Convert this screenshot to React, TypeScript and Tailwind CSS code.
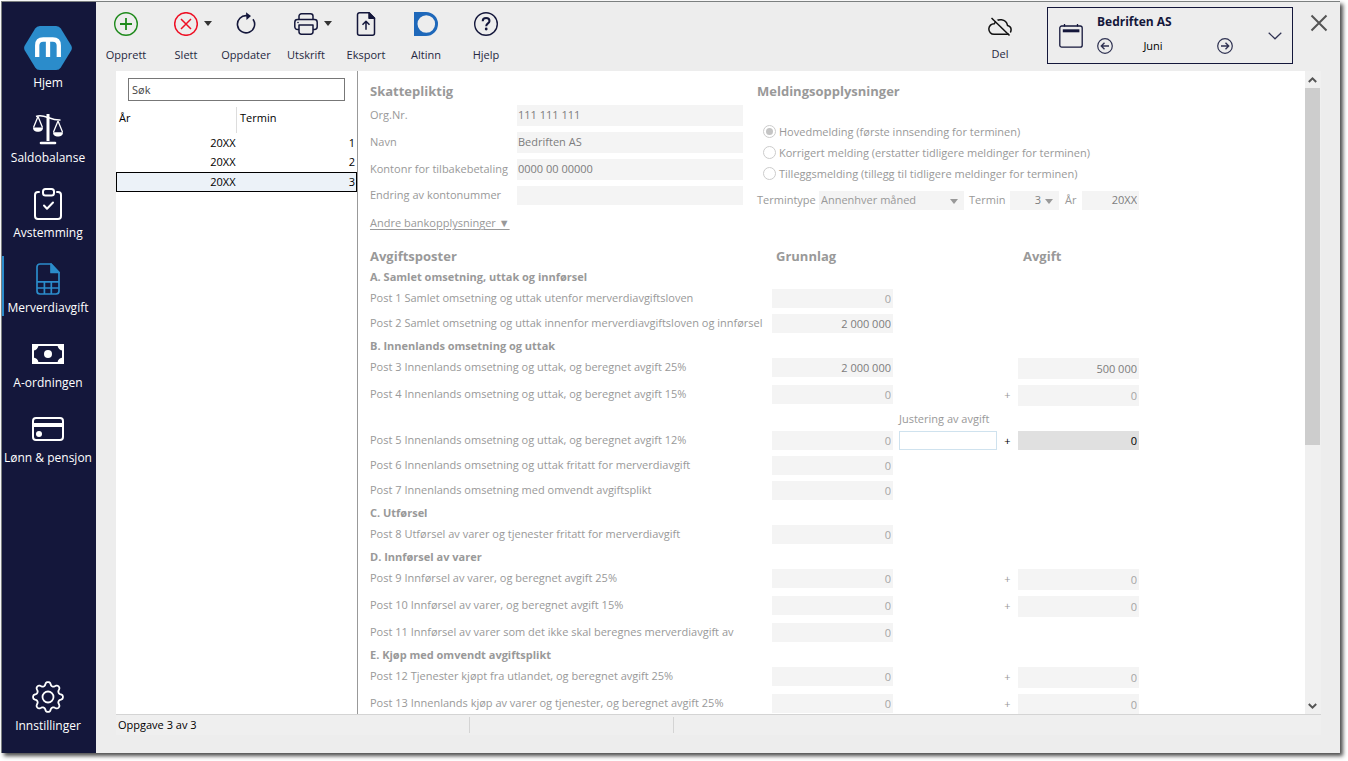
import React from "react";

type IconProps = { className?: string };

/* ---------- sidebar icons ---------- */

const LogoIcon = () => (
  <svg className="shrink-0" width="48" height="44" viewBox="0 0 48 44" aria-hidden="true">
    <path d="M11.2 2.6Q12.800 0 15.800 0H32.200Q35.200 0 36.800 2.600L47.200 19.600Q48.600 22 47.200 24.400L36.800 41.400Q35.200 44 32.200 44H15.800Q12.800 44 11.200 41.400L.8 24.400Q-.6 22 .8 19.600Z" fill="#2b8ccb" />
    <path d="M13.200 31V19.500q0-6 6-6h9.600q6 0 6 6V31M24 13.500V31" fill="none" stroke="#fff" strokeWidth="4.300" />
  </svg>
);

const ScalesIcon = () => (
  <svg width="32" height="32" viewBox="0 0 32 32" fill="none" stroke="#fff" strokeWidth="1.500" aria-hidden="true">
    <path d="M16 1v27" strokeWidth="3" />
    <path d="M9 30h14" strokeWidth="2.600" strokeLinecap="round" />
    <path d="M4 3.500c4-1.500 8-.5 12 1s7 2.800 12.500 2.500" />
    <path d="M6 3.500 1.500 14.500M6 3.500l4.500 11M26 8l-4.500 11M26 8l4.500 11" strokeWidth="1.300" />
    <path d="M1 14.500h10c0 3-2.200 4.300-5 4.300s-5-1.300-5-4.300ZM21 19.200h10c0 3-2.200 4.300-5 4.300s-5-1.300-5-4.300Z" fill="#fff" stroke="none" />
  </svg>
);

const ClipboardIcon = () => (
  <svg width="32" height="32" viewBox="0 0 32 32" fill="none" stroke="#fff" strokeWidth="2" strokeLinecap="round" strokeLinejoin="round" aria-hidden="true">
    <path d="M7 4H6a3 3 0 0 0-3 3v21a3 3 0 0 0 3 3h20a3 3 0 0 0 3-3V7a3 3 0 0 0-3-3h-1" />
    <rect x="11" y="1" width="11" height="6.500" rx="2.500" />
    <path d="m12 17.500 3 3.200 6-6.200" />
  </svg>
);

const SheetIcon = () => (
  <svg width="32" height="32" viewBox="0 0 32 32" fill="none" stroke="#2b8ccb" strokeWidth="1.700" strokeLinejoin="round" aria-hidden="true">
    <path d="M19 1H8a3 3 0 0 0-3 3v24a3 3 0 0 0 3 3h16a3 3 0 0 0 3-3V9.500Z" />
    <path d="M19 1v8.500h8Z" fill="#2b8ccb" />
    <path d="M5 18.800h22M5 25h22M12.400 18.800V31M19.300 18.800V31" />
  </svg>
);

const BanknoteIcon = () => (
  <svg width="32" height="32" viewBox="0 0 32 32" aria-hidden="true">
    <rect x="1" y="7" width="30" height="18" fill="none" stroke="#fff" strokeWidth="2" />
    <path d="M1 7h5.500A5.500 5.500 0 0 1 1 12.500ZM31 7v5.500A5.500 5.500 0 0 1 25.500 7ZM1 25v-5.500A5.500 5.500 0 0 1 6.500 25ZM31 25h-5.500a5.500 5.500 0 0 1 5.500-5.500Z" fill="#fff" />
    <circle cx="16" cy="16" r="4" fill="#fff" />
  </svg>
);

const CardIcon = () => (
  <svg width="32" height="32" viewBox="0 0 32 32" aria-hidden="true">
    <rect x="1" y="5" width="30" height="22" rx="3" fill="none" stroke="#fff" strokeWidth="2" />
    <path d="M1 10h30v4H1Z" fill="#fff" />
    <circle cx="7" cy="21" r="3" fill="#fff" />
  </svg>
);

const gearOutline =
  Array.from({ length: 160 }, (_, i) => {
    const a = (i / 160) * Math.PI * 2;
    const r = 13.2 + 1.9 * Math.tanh(1.5 * Math.cos(8 * a));
    return `${i ? "L" : "M"}${(16 + r * Math.cos(a)).toFixed(2)} ${(16 + r * Math.sin(a)).toFixed(2)}`;
  }).join("") + "Z";

const GearIcon = () => (
  <svg width="32" height="32" viewBox="0 0 32 32" fill="none" stroke="#fff" strokeWidth="1.800" strokeLinejoin="round" aria-hidden="true">
    <path d={gearOutline} />
    <circle cx="16" cy="16" r="5.500" />
  </svg>
);

/* ---------- toolbar icons ---------- */

const AddIcon = () => (
  <svg width="24" height="24" viewBox="0 0 24 24" fill="none" stroke="#1f8a1c" strokeWidth="1.400" aria-hidden="true">
    <circle cx="12" cy="12" r="11.300" />
    <path d="M12 6v12M6 12h12" strokeWidth="1.800" />
  </svg>
);

const DeleteIcon = () => (
  <svg width="24" height="24" viewBox="0 0 24 24" fill="none" stroke="#ee1025" strokeWidth="1.500" aria-hidden="true">
    <circle cx="12" cy="12" r="11.300" />
    <path d="m7 7 10 10M17 7 7 17" />
  </svg>
);

const RefreshIcon = () => (
  <svg width="24" height="24" viewBox="0 0 24 24" aria-hidden="true">
    <path d="M13 3.700a8.600 8.600 0 1 0 6 3.500" fill="none" stroke="#14173b" strokeWidth="1.600" />
    <path d="M12 .3 17 4l-4.500 4Z" fill="#14173b" />
  </svg>
);

const PrinterIcon = () => (
  <svg width="24" height="24" viewBox="0 0 24 24" fill="none" stroke="#14173b" strokeWidth="1.500" strokeLinejoin="round" aria-hidden="true">
    <path d="M5 7.500V4.200a2.500 2.500 0 0 1 2.500-2.500h9A2.500 2.500 0 0 1 19 4.200v3.300" />
    <path d="M5 17.500H3.500a2.700 2.700 0 0 1-2.700-2.700v-4.600a2.700 2.700 0 0 1 2.700-2.700h17a2.700 2.700 0 0 1 2.700 2.700v4.600a2.700 2.700 0 0 1-2.700 2.700H19" />
    <path d="M5 13h14v6.800a2.400 2.400 0 0 1-2.400 2.400H7.400A2.400 2.400 0 0 1 5 19.800Z" />
    <circle cx="4" cy="10.500" r=".8" fill="#14173b" stroke="none" />
  </svg>
);

const ExportIcon = () => (
  <svg width="24" height="24" viewBox="0 0 24 24" fill="none" stroke="#14173b" strokeWidth="1.500" strokeLinejoin="round" aria-hidden="true">
    <path d="M15 .8H5.500a2 2 0 0 0-2 2v18.400a2 2 0 0 0 2 2h13a2 2 0 0 0 2-2V6.300Z" />
    <path d="M15 .8v5.500h5.500Z" fill="#14173b" />
    <path d="M12 17.800V9.500M8.500 12.800 12 9.300l3.500 3.500" />
  </svg>
);

const AltinnIcon = () => (
  <svg width="24" height="24" viewBox="0 0 24 24" aria-hidden="true">
    <path fillRule="evenodd" d="M0 0h12a12 12 0 0 1 0 24H0ZM12.300 3.200a8.800 8.800 0 1 0 0 17.600 8.800 8.800 0 0 0 0-17.600Z" fill="#1e68ba" />
  </svg>
);

const HelpIcon = () => (
  <svg width="24" height="24" viewBox="0 0 24 24" fill="none" stroke="#14173b" aria-hidden="true">
    <circle cx="12" cy="12" r="11.300" strokeWidth="1.400" />
    <path d="M8.700 9.200c0-2 1.400-3.200 3.400-3.200s3.400 1.100 3.400 2.900c0 2.400-3.300 2.600-3.300 5.300" strokeWidth="2" />
    <circle cx="12.200" cy="17" r="1.400" fill="#14173b" stroke="none" />
  </svg>
);

const CloudOffIcon = () => (
  <svg width="24" height="24" viewBox="0 0 24 24" fill="none" stroke="#111" strokeWidth="1.500" aria-hidden="true">
    <path d="M6 20.300h12.800a4.500 4.500 0 0 0 .7-8.900A7 7 0 0 0 6.300 9.700 5.300 5.300 0 0 0 6 20.300Z" />
    <path d="M4.500 3 23 20.500" stroke="#ededed" strokeWidth="2" />
    <path d="M3.500 4 21.500 21.500" />
  </svg>
);

const CalendarIcon = () => (
  <svg width="24" height="24" viewBox="0 0 24 24" fill="none" stroke="#14173b" strokeWidth="1.300" aria-hidden="true">
    <rect x=".8" y="2" width="22.400" height="21.200" rx="2" />
    <path d="M5.500 0v2.500M18.500 0v2.500" />
    <path d="M3.800 6.800h16.600" strokeWidth="3" />
  </svg>
);

const CircleArrow = ({ className = "" }: IconProps) => (
  <svg className={className} width="16" height="16" viewBox="0 0 16 16" fill="none" stroke="#2f3252" strokeWidth="1.200" aria-hidden="true">
    <circle cx="8" cy="8" r="7.300" />
    <path d="M4.500 8h7.500M7.500 4.800 4.300 8l3.200 3.200" strokeWidth="1.400" />
  </svg>
);

const ChevronDown = () => (
  <svg width="14" height="8" viewBox="0 0 14 8" fill="none" stroke="#2f3252" strokeWidth="1.200" aria-hidden="true">
    <path d="m.7.800 6.300 6 6.300-6" />
  </svg>
);

const Caret = ({ className = "" }: IconProps) => (
  <svg className={className} width="8" height="5" viewBox="0 0 8 5" aria-hidden="true">
    <path d="M0 0h8L4 5Z" fill="currentColor" />
  </svg>
);

const ScrollChevron = ({ className = "" }: IconProps) => (
  <svg className={className} width="9" height="6" viewBox="0 0 9 6" fill="none" stroke="#555" strokeWidth="2" aria-hidden="true">
    <path d="m.8 5 3.700-3.600L8.200 5" />
  </svg>
);

/* ---------- data ---------- */

const navItems = [
  { label: "Hjem", icon: <LogoIcon /> },
  { label: "Saldobalanse", icon: <ScalesIcon /> },
  { label: "Avstemming", icon: <ClipboardIcon /> },
  { label: "Merverdiavgift", icon: <SheetIcon />, active: true },
  { label: "A-ordningen", icon: <BanknoteIcon /> },
  { label: "Lønn & pensjon", icon: <CardIcon /> },
];

const tools = [
  { label: "Opprett", icon: <AddIcon /> },
  { label: "Slett", icon: <DeleteIcon />, menu: true },
  { label: "Oppdater", icon: <RefreshIcon /> },
  { label: "Utskrift", icon: <PrinterIcon />, menu: true },
  { label: "Eksport", icon: <ExportIcon /> },
  { label: "Altinn", icon: <AltinnIcon /> },
  { label: "Hjelp", icon: <HelpIcon /> },
];

const periods = [
  { year: "20XX", term: 1, row: "h-[19px]" },
  { year: "20XX", term: 2, row: "h-5" },
  { year: "20XX", term: 3, row: "h-5 bg-[#ecf2f8] outline outline-1 -outline-offset-1 outline-black" },
];

const payerFields = [
  { id: "orgnr", label: "Org.Nr.", value: "111 111 111" },
  { id: "navn", label: "Navn", value: "Bedriften AS" },
  { id: "konto", label: "Kontonr for tilbakebetaling", value: "0000 00 00000" },
  { id: "endring", label: "Endring av kontonummer", value: "" },
];

const messageTypes = [
  "Hovedmelding (første innsending for terminen)",
  "Korrigert melding (erstatter tidligere meldinger for terminen)",
  "Tilleggsmelding (tillegg til tidligere meldinger for terminen)",
];

type Post = { label: string; base: string; tax?: string; plus?: boolean; adjust?: boolean };

const sections: { title: string; posts: Post[] }[] = [
  {
    title: "A. Samlet omsetning, uttak og innførsel",
    posts: [
      { label: "Post 1 Samlet omsetning og uttak utenfor merverdiavgiftsloven", base: "0" },
      { label: "Post 2 Samlet omsetning og uttak innenfor merverdiavgiftsloven og innførsel", base: "2 000 000" },
    ],
  },
  {
    title: "B. Innenlands omsetning og uttak",
    posts: [
      { label: "Post 3 Innenlands omsetning og uttak, og beregnet avgift 25%", base: "2 000 000", tax: "500 000" },
      { label: "Post 4 Innenlands omsetning og uttak, og beregnet avgift 15%", base: "0", tax: "0", plus: true },
      { label: "Post 5 Innenlands omsetning og uttak, og beregnet avgift 12%", base: "0", tax: "0", plus: true, adjust: true },
      { label: "Post 6 Innenlands omsetning og uttak fritatt for merverdiavgift", base: "0" },
      { label: "Post 7 Innenlands omsetning med omvendt avgiftsplikt", base: "0" },
    ],
  },
  {
    title: "C. Utførsel",
    posts: [{ label: "Post 8 Utførsel av varer og tjenester fritatt for merverdiavgift", base: "0" }],
  },
  {
    title: "D. Innførsel av varer",
    posts: [
      { label: "Post 9 Innførsel av varer, og beregnet avgift 25%", base: "0", tax: "0", plus: true },
      { label: "Post 10 Innførsel av varer, og beregnet avgift 15%", base: "0", tax: "0", plus: true },
      { label: "Post 11 Innførsel av varer som det ikke skal beregnes merverdiavgift av", base: "0" },
    ],
  },
  {
    title: "E. Kjøp med omvendt avgiftsplikt",
    posts: [
      { label: "Post 12 Tjenester kjøpt fra utlandet, og beregnet avgift 25%", base: "0", tax: "0", plus: true },
      { label: "Post 13 Innenlands kjøp av varer og tjenester, og beregnet avgift 25%", base: "0", tax: "0", plus: true },
    ],
  },
];

/* ---------- parts ---------- */

function NavButton({ label, icon, active }: { label: string; icon: React.ReactNode; active?: boolean }) {
  return (
    <button
      type="button"
      className={`flex h-[60px] w-full flex-col items-center justify-end gap-[5px] border-l-2 pr-1 text-[12px] leading-4 whitespace-nowrap text-white ${
        active ? "border-[#2b8ccb]" : "border-transparent"
      }`}
    >
      {icon}
      {label}
    </button>
  );
}

function Sidebar() {
  return (
    <nav className="flex w-[94px] shrink-0 flex-col justify-between bg-[#14173b] pt-[29px] pb-[19px]">
      <div className="flex flex-col gap-[15px]">
        {navItems.map((n) => (
          <NavButton key={n.label} {...n} />
        ))}
      </div>
      <NavButton label="Innstillinger" icon={<GearIcon />} />
    </nav>
  );
}

function Toolbar() {
  return (
    <header className="flex h-[69px] shrink-0 items-start">
      <div className="flex pt-2.5">
        {tools.map((t) => (
          <button key={t.label} type="button" className="flex w-[60px] flex-col items-center gap-[11px] text-[11px] leading-4 whitespace-nowrap text-[#26283f]">
            <span className="relative">
              {t.icon}
              {t.menu && <Caret className="absolute top-[9px] left-[30px] text-[#333]" />}
            </span>
            {t.label}
          </button>
        ))}
      </div>
      <button type="button" className="ml-auto flex w-12 flex-col items-center gap-2 pt-3 text-[11px] leading-4 text-[#26283f]">
        <CloudOffIcon />
        Del
      </button>
      <div className="mt-[5px] ml-[23px] flex h-[57px] w-[246px] items-center border border-[#14173b] pr-2.5 pl-[11px] text-[#14173b]">
        <CalendarIcon />
        <div className="ml-3.5 flex w-[136px] flex-col gap-2 pb-1">
          <strong className="text-[12px] leading-4 font-bold">Bedriften AS</strong>
          <div className="flex items-center justify-between">
            <button type="button" aria-label="Forrige termin">
              <CircleArrow />
            </button>
            <span className="pr-6 text-[11px] leading-4 text-black">Juni</span>
            <button type="button" aria-label="Neste termin">
              <CircleArrow className="rotate-180" />
            </button>
          </div>
        </div>
        <button type="button" aria-label="Velg bedrift" className="ml-auto">
          <ChevronDown />
        </button>
      </div>
      <button type="button" aria-label="Lukk" className="mt-3 mr-3 ml-[17px]">
        <svg width="18" height="18" viewBox="0 0 18 18" fill="none" stroke="#555" strokeWidth="2" aria-hidden="true">
          <path d="m1.500 1.500 15 15M16.500 1.500l-15 15" />
        </svg>
      </button>
    </header>
  );
}

function PeriodList() {
  return (
    <aside className="flex w-[242px] shrink-0 flex-col border-r border-[#999] bg-white pt-[7px] text-[11px] text-black">
      <input
        type="text"
        aria-label="Søk"
        placeholder="Søk"
        className="mx-3 h-[23px] border border-[#777] bg-white px-[3px] leading-4 placeholder:text-[#444]"
      />
      <table className="mt-1.5 w-full table-fixed border-collapse leading-4">
        <thead>
          <tr className="h-[26px]">
            <th scope="col" className="border-r border-[#ddd] pb-1 pl-[3px] text-left align-middle font-normal">År</th>
            <th scope="col" className="pb-1 pl-[3px] text-left align-middle font-normal">Termin</th>
          </tr>
        </thead>
        <tbody>
          {periods.map((p) => (
            <tr key={p.term} className={p.row}>
              <td className="p-0 pr-px text-right">{p.year}</td>
              <td className="p-0 pr-0.5 text-right">{p.term}</td>
            </tr>
          ))}
        </tbody>
      </table>
    </aside>
  );
}

const heading = "text-[13px] leading-4 font-bold";

function PayerSection() {
  return (
    <section className="w-[387px] shrink-0">
      <h2 className={heading}>Skattepliktig</h2>
      <div className="mt-1.5 flex flex-col gap-1.5">
        {payerFields.map((f, i) => (
          <div key={f.id} className="flex items-center">
            <label htmlFor={f.id} className="w-[147px] pb-0.5 whitespace-nowrap">
              {f.label}
            </label>
            <input
              id={f.id}
              disabled
              defaultValue={f.value}
              className={`w-[226px] bg-[#f4f4f4] px-px pb-0.5 text-[#7d7d7d] ${i === 3 ? "h-[19px]" : "h-[21px]"}`}
            />
          </div>
        ))}
      </div>
      <a href="#bank" className="mt-2.5 inline-block underline underline-offset-2">
        Andre bankopplysninger ▼
      </a>
    </section>
  );
}

function MessageSection() {
  return (
    <section>
      <h2 className={heading}>Meldingsopplysninger</h2>
      <fieldset disabled className="mt-[22px] pl-1.5">
        {messageTypes.map((m, i) => (
          <label key={m} className="flex h-[21px] items-center gap-[3px] whitespace-nowrap">
            <input
              type="radio"
              name="meldingstype"
              defaultChecked={i === 0}
              className="size-[13px] appearance-none rounded-full border border-[#ccc] bg-white bg-clip-content p-0.5 checked:bg-[#c4c4c4]"
            />
            {m}
          </label>
        ))}
      </fieldset>
      <div className="mt-[7px] flex h-[19px] items-center">
        <label htmlFor="termintype" className="w-[62px] pb-0.5">Termintype</label>
        <span className="relative flex">
          <select id="termintype" disabled className="h-[19px] w-[145px] appearance-none bg-[#f4f4f4] px-0.5 pb-0.5 text-[#999] opacity-100">
            <option>Annenhver måned</option>
          </select>
          <Caret className="absolute top-2 right-1.5 text-[#999]" />
        </span>
        <label htmlFor="termin" className="ml-[5px] w-[41px] pb-0.5">Termin</label>
        <span className="relative flex">
          <select id="termin" disabled className="h-[19px] w-[49px] appearance-none bg-[#f4f4f4] pr-[18px] pb-0.5 text-right text-[#7d7d7d] opacity-100 [text-align-last:right]">
            <option>3</option>
          </select>
          <Caret className="absolute top-2 right-1.5 text-[#999]" />
        </span>
        <label htmlFor="ar" className="ml-1.5 w-[17px] pb-0.5">År</label>
        <input id="ar" disabled defaultValue="20XX" className="h-[19px] w-[57px] bg-[#f4f4f4] px-0.5 pb-0.5 text-right text-[#7d7d7d]" />
      </div>
    </section>
  );
}

function PostRow({ post }: { post: Post }) {
  const { label, base, tax, plus, adjust } = post;
  const tall = tax !== undefined && !adjust;
  return (
    <tr className={tall ? "h-[27px]" : "h-[25px]"}>
      <th scope="row" className="p-0 pt-px text-left font-normal whitespace-nowrap">{label}</th>
      <td className="p-0">
        <input
          aria-label={`${label}, grunnlag`}
          disabled
          defaultValue={base}
          className={`block h-[19px] w-[121px] bg-[#f4f4f4] px-0.5 text-right ${base === "0" ? "text-[#a5a5a5]" : "text-[#7d7d7d]"}`}
        />
      </td>
      <td className="p-0 pl-1.5">
        {adjust && <input id="justering" className="block h-[19px] w-[98px] border border-[#cfe2ee] bg-white px-0.5 text-right text-black" />}
      </td>
      <td className={`p-0 pt-0.5 text-center ${adjust ? "text-black" : ""}`}>{plus && "+"}</td>
      <td className="p-0">
        {tax !== undefined && (
          <input
            aria-label={`${label}, avgift`}
            disabled={!adjust}
            readOnly
            defaultValue={tax}
            className={`block w-[121px] px-0.5 text-right ${
              adjust ? "h-[19px] bg-[#e0e0e0] text-black" : `h-[21px] bg-[#f4f4f4] ${tax === "0" ? "text-[#a5a5a5]" : "text-[#7d7d7d]"}`
            }`}
          />
        )}
      </td>
    </tr>
  );
}

function PostTable() {
  return (
    <table className="mt-[18px] w-[769px] table-fixed border-collapse">
      <colgroup>
        <col className="w-[402px]" />
        <col className="w-[121px]" />
        <col className="w-[104px]" />
        <col className="w-[21px]" />
        <col className="w-[121px]" />
      </colgroup>
      <thead>
        <tr className="h-[22px] align-top text-left text-[13px] leading-4">
          <th scope="col" className="p-0 font-bold">Avgiftsposter</th>
          <th scope="col" className="p-0 pl-1 font-bold">Grunnlag</th>
          <td />
          <td />
          <th scope="col" className="p-0 pl-[5px] font-bold">Avgift</th>
        </tr>
      </thead>
      <tbody className="align-top">
        {sections.map((s) => (
          <React.Fragment key={s.title}>
            <tr className="h-[19px]">
              <th colSpan={5} scope="rowgroup" className="p-0 text-left leading-[13px] font-bold">{s.title}</th>
            </tr>
            {s.posts.map((p) => (
              <React.Fragment key={p.label}>
                {p.adjust && (
                  <tr className="h-[19px]">
                    <td colSpan={2} className="p-0" />
                    <td colSpan={3} className="p-0 pl-1.5 leading-[13px]">
                      <label htmlFor="justering">Justering av avgift</label>
                    </td>
                  </tr>
                )}
                <PostRow post={p} />
              </React.Fragment>
            ))}
          </React.Fragment>
        ))}
      </tbody>
    </table>
  );
}

function Scrollbar() {
  return (
    <div className="flex w-4 shrink-0 flex-col bg-[#f0f0f0]">
      <button type="button" aria-label="Rull opp" className="flex h-[17px] w-[15px] shrink-0 items-center justify-center">
        <ScrollChevron />
      </button>
      <div className="flex flex-1 flex-col">
        <div className="w-[15px] flex-[17] bg-[#cdcdcd]" />
        <div className="flex-[12]" />
      </div>
      <button type="button" aria-label="Rull ned" className="flex h-[17px] w-[15px] shrink-0 items-center justify-center">
        <ScrollChevron className="rotate-180" />
      </button>
    </div>
  );
}

export default function App() {
  return (
    <div className="h-screen bg-white pt-px pr-2 pb-2 pl-px font-['Open_Sans','Noto_Sans',sans-serif]">
      <div className="flex h-full border-t border-l border-[#7c8080] bg-[#ededed] shadow-[3px_3px_4px_0px_rgba(0,0,0,0.7)]">
        <Sidebar />
        <div className="flex min-w-0 flex-1 flex-col">
          <Toolbar />
          <div className="mr-[19px] ml-5 flex min-h-0 flex-1">
            <PeriodList />
            <main className="min-w-0 flex-1 overflow-hidden bg-white pt-3 pl-3 text-[11px] leading-[15px] text-[#999]">
              <div className="flex">
                <PayerSection />
                <MessageSection />
              </div>
              <PostTable />
            </main>
            <Scrollbar />
          </div>
          <footer className="mr-[19px] mb-[18px] ml-5 flex h-[21px] shrink-0 items-center border-t border-[#d4d4d4] bg-[#efefef] text-[11px] leading-4 text-black">
            <span className="w-[354px] border-r border-[#d4d4d4] pl-0.5">Oppgave 3 av 3</span>
            <span className="h-4 w-[204px] border-r border-[#d4d4d4]" />
          </footer>
        </div>
      </div>
    </div>
  );
}
